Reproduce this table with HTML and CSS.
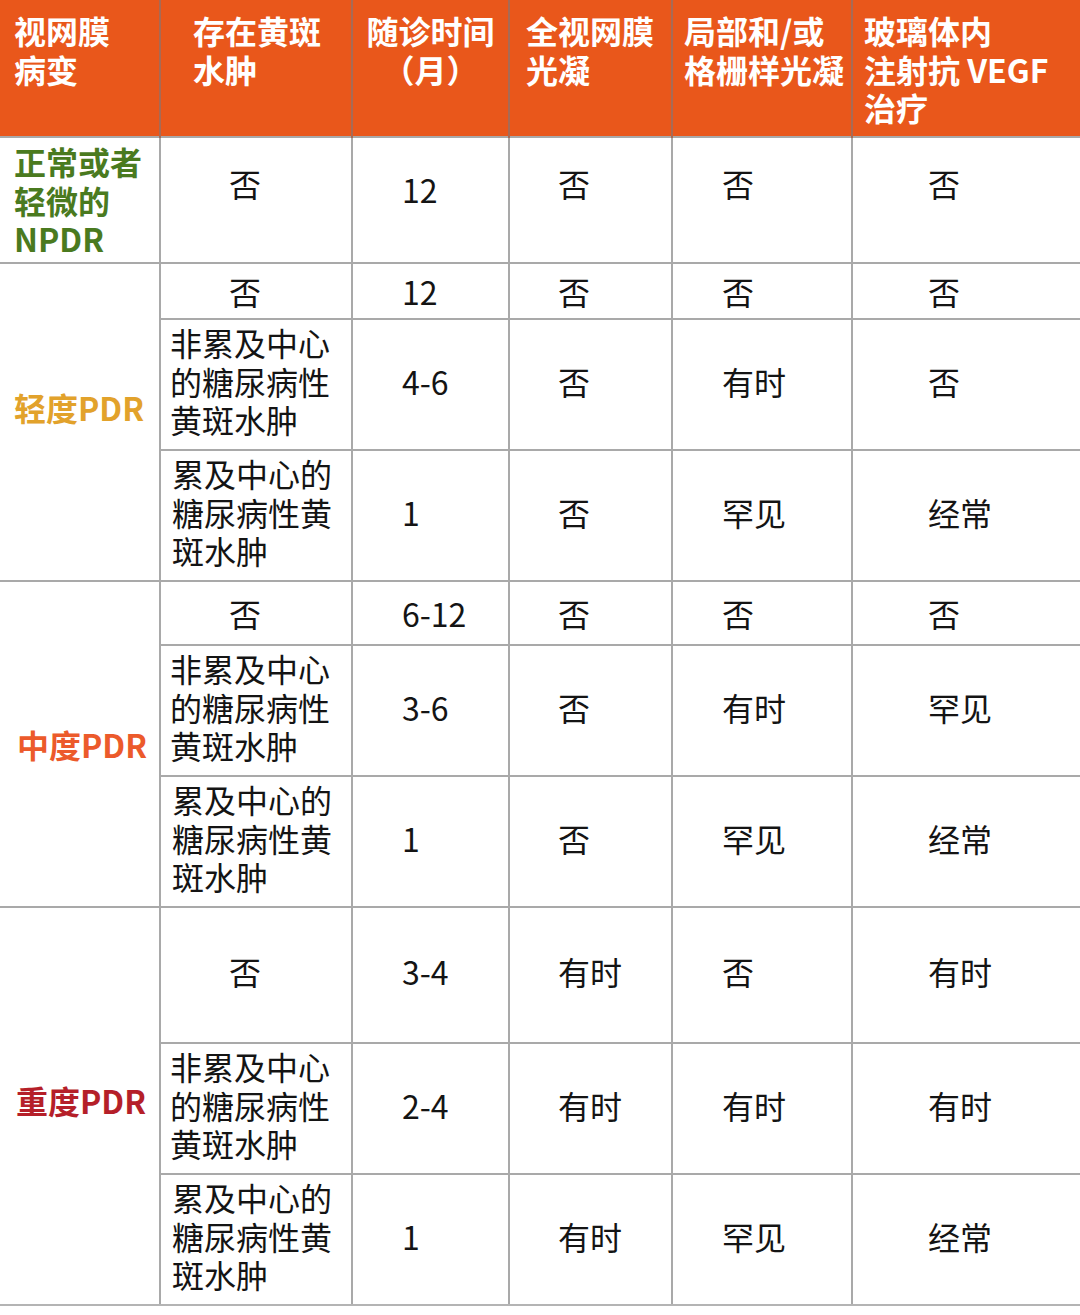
FILE: index.html
```html
<!DOCTYPE html>
<html lang="zh-CN">
<head>
<meta charset="utf-8">
<title>糖尿病视网膜病变随诊表</title>
<link rel="stylesheet" href="styles.css">
</head>
<body>
<table class="grid">
  <colgroup>
    <col class="w1"><col class="w2"><col class="w3"><col class="w4"><col class="w5"><col class="w6">
  </colgroup>
  <thead>
    <tr class="head">
      <th class="h1">视网膜<br>病变</th>
      <th class="h2">存在黄斑<br>水肿</th>
      <th class="h3">随诊时间<br>（月）</th>
      <th class="h4">全视网膜<br>光凝</th>
      <th class="h5">局部和/或<br>格栅样光凝</th>
      <th class="h6">玻璃体内<br>注射抗 VEGF<br>治疗</th>
    </tr>
  </thead>
  <tbody>
    <tr class="r126 first">
      <td class="stage green">正常或者<br>轻微的<br>NPDR</td>
      <td class="c2 one">否</td>
      <td class="c3">12</td>
      <td class="c4">否</td>
      <td class="c5">否</td>
      <td class="c6">否</td>
    </tr>

    <tr class="r56 slim">
      <td class="stage gold" rowspan="3">轻度PDR</td>
      <td class="c2 one">否</td>
      <td class="c3">12</td>
      <td class="c4">否</td>
      <td class="c5">否</td>
      <td class="c6">否</td>
    </tr>
    <tr class="r131">
      <td class="c2">非累及中心<br>的糖尿病性<br>黄斑水肿</td>
      <td class="c3">4-6</td>
      <td class="c4">否</td>
      <td class="c5">有时</td>
      <td class="c6">否</td>
    </tr>
    <tr class="r131">
      <td class="c2 alt">累及中心的<br>糖尿病性黄<br>斑水肿</td>
      <td class="c3">1</td>
      <td class="c4">否</td>
      <td class="c5">罕见</td>
      <td class="c6">经常</td>
    </tr>

    <tr class="r64 slim">
      <td class="stage orange" rowspan="3">中度PDR</td>
      <td class="c2 one">否</td>
      <td class="c3">6-12</td>
      <td class="c4">否</td>
      <td class="c5">否</td>
      <td class="c6">否</td>
    </tr>
    <tr class="r131">
      <td class="c2">非累及中心<br>的糖尿病性<br>黄斑水肿</td>
      <td class="c3">3-6</td>
      <td class="c4">否</td>
      <td class="c5">有时</td>
      <td class="c6">罕见</td>
    </tr>
    <tr class="r131">
      <td class="c2 alt">累及中心的<br>糖尿病性黄<br>斑水肿</td>
      <td class="c3">1</td>
      <td class="c4">否</td>
      <td class="c5">罕见</td>
      <td class="c6">经常</td>
    </tr>

    <tr class="r136">
      <td class="stage red" rowspan="3">重度PDR</td>
      <td class="c2 one">否</td>
      <td class="c3">3-4</td>
      <td class="c4">有时</td>
      <td class="c5">否</td>
      <td class="c6">有时</td>
    </tr>
    <tr class="r131">
      <td class="c2">非累及中心<br>的糖尿病性<br>黄斑水肿</td>
      <td class="c3">2-4</td>
      <td class="c4">有时</td>
      <td class="c5">有时</td>
      <td class="c6">有时</td>
    </tr>
    <tr class="r131">
      <td class="c2 alt">累及中心的<br>糖尿病性黄<br>斑水肿</td>
      <td class="c3">1</td>
      <td class="c4">有时</td>
      <td class="c5">罕见</td>
      <td class="c6">经常</td>
    </tr>
  </tbody>
</table>
</body>
</html>
```
FILE: styles.css
```css
html, body {
  margin: 0;
  padding: 0;
  background: #ffffff;
}

body {
  font-family: "Noto Sans CJK SC", "Noto Sans", sans-serif;
  color: #141414;
}

.grid {
  width: 1080px;
  table-layout: fixed;
  border-collapse: collapse;
  border-spacing: 0;
}

.w1 { width: 160px; }
.w2 { width: 192px; }
.w3 { width: 157px; }
.w4 { width: 163px; }
.w5 { width: 180px; }
.w6 { width: 228px; }

.grid th,
.grid td {
  box-sizing: border-box;
  font-size: 32px;
  line-height: 38.5px;
  padding: 0;
  white-space: nowrap;
}

/* header */
.head {
  height: 137px;
  background: #e9571b;
}

.grid th {
  color: #ffffff;
  font-weight: 700;
  text-align: left;
  vertical-align: top;
  padding-top: 11px;
  border-left: 2px solid #a86a55;
  border-right: 2px solid #a86a55;
}

.grid th.h1 { padding-left: 14px; border-left: none; }
.grid th.h2 { padding-left: 32px; }
.grid th.h3 { text-align: center; }
.grid th.h4 { padding-left: 16px; }
.grid th.h5 { padding-left: 11px; }
.grid th.h6 { padding-left: 11px; border-right: none; }

/* body */
.grid td {
  font-weight: 400;
  text-align: left;
  vertical-align: middle;
  border: 2px solid #a9a9a9;
  padding-bottom: 7px;
}

.grid .slim td { padding-bottom: 0; }

.grid td:last-child { border-right: none; }
.grid td.stage { border-left: none; }
.grid tbody tr:last-child td,
.grid td.stage.red { border-bottom: 2px solid #b4b4b4; }

.r126 { height: 126px; }
.r56 { height: 56px; }
.r64 { height: 64px; }
.r131 { height: 131px; }
.r136 { height: 136px; }

.grid td.stage {
  font-weight: 700;
  padding-left: 15px;
  padding-bottom: 0;
}

.grid td.green { color: #4a7a1f; padding-left: 14px; }
.grid td.gold { color: #e2a22b; padding-left: 14px; padding-bottom: 30px; }
.grid td.orange { color: #ec5a2b; padding-left: 17px; }
.grid td.red { color: #b51f29; padding-left: 16px; padding-bottom: 12px; }

.grid td.c2 { padding-left: 9px; }
.grid td.c2.alt { padding-left: 11px; }
.grid td.c2.one {
  text-align: center;
  padding-left: 0;
  padding-right: 22px;
}

.grid td.c3 { padding-left: 49px; }
.grid td.c4 { padding-left: 48px; }
.grid td.c5 { padding-left: 49px; }
.grid td.c6 { padding-left: 75px; }

.grid .first td.c2,
.grid .first td.c4,
.grid .first td.c5,
.grid .first td.c6 {
  padding-bottom: 34px;
}

.grid .first td.c3 { padding-bottom: 22px; }
```
